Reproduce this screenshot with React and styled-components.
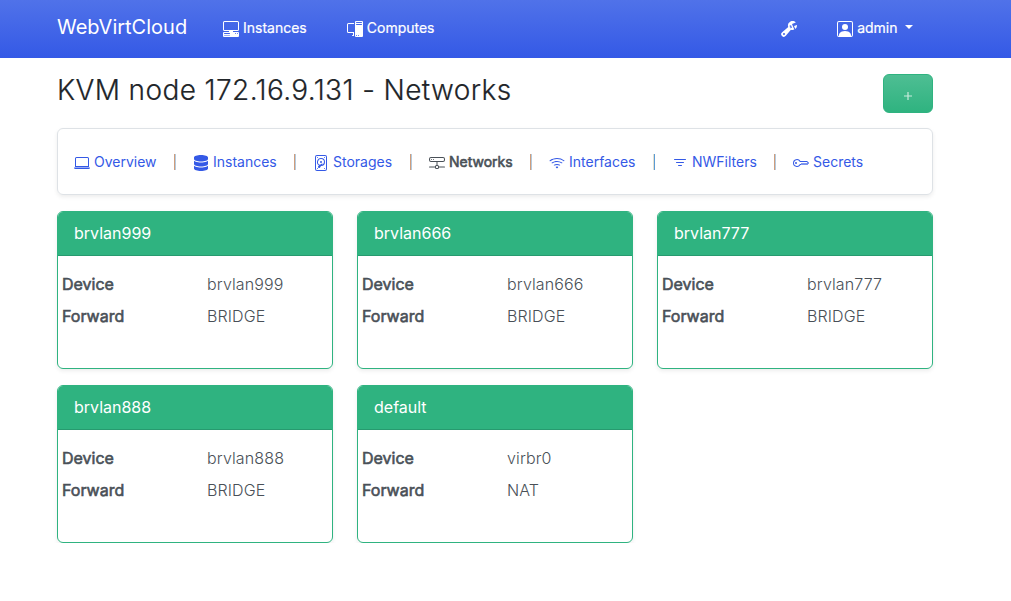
import React from 'react';
import styled, { createGlobalStyle } from 'styled-components';
import {
  BsPcDisplayHorizontal, BsPcDisplay, BsWrenchAdjustable, BsPersonSquare, BsLaptop,
  BsDeviceHdd, BsHddNetwork, BsWifi, BsFilter, BsKey,
} from 'react-icons/bs';
import { FaDatabase } from 'react-icons/fa6';

const Global = createGlobalStyle`
  *, *::before, *::after { box-sizing: border-box; }
  body {
    margin: 0;
    background: #fff;
    color: #495057;
    font-family: Inter, "Liberation Sans", sans-serif;
    font-size: 16px;
    font-weight: 400;
    line-height: 24px;
  }
`;

const Navbar = styled.header`
  display: flex;
  align-items: center;
  height: 58px;
  padding: 0 98px 0 57px;
  color: #fff;
  background: linear-gradient(180deg, #5072e9, #3459e6);
`;

const Brand = styled.div`
  width: 166px;
  font-size: 20px;
  line-height: 30px;
  padding-bottom: 4px;
`;

const NavItem = styled.a`
  display: flex;
  align-items: center;
  gap: 4px;
  height: 22px;
  padding-bottom: 2px;
  margin-right: ${(p) => p.$gap || 0}px;
  font-size: 14px;
  -webkit-text-stroke: 0.2px;
  white-space: nowrap;
  svg { position: relative; top: 1px; }
`;

const NavEnd = styled.div`
  display: flex;
  margin-left: auto;
`;

const Caret = styled.span`
  margin: -2px 0 0 3.5px;
  border-top: 4px solid #fff;
  border-left: 4px solid transparent;
  border-right: 4px solid transparent;
`;

const Page = styled.main`
  width: 876px;
  margin-left: 57px;
`;

const TitleRow = styled.div`
  display: flex;
  justify-content: space-between;
  height: 70px;
  padding-top: 16px;
`;

const Title = styled.h1`
  margin: 0;
  color: #212529;
  font-size: 28px;
  font-weight: 300;
  letter-spacing: 0.39px;
  line-height: 33px;
  -webkit-text-stroke: 0.2px;
`;

const AddButton = styled.button`
  display: flex;
  align-items: center;
  justify-content: center;
  width: 50px;
  height: 39px;
  padding: 5px 0 0;
  border: 1px solid #2fb380;
  border-radius: 6px;
  background: linear-gradient(180deg, #4ebe93, #2fb380);
`;

const Tabs = styled.nav`
  display: flex;
  align-items: center;
  height: 67px;
  padding: 0 16px;
  border: 1px solid #dee2e6;
  border-radius: 6px;
  box-shadow: 0 2px 4px rgba(0, 0, 0, 0.075);
  font-size: 14px;
`;

const Tab = styled.a`
  display: flex;
  align-items: center;
  gap: 4px;
  width: ${(p) => p.$w}px;
  flex-shrink: 0;
  color: ${(p) => (p.$active ? '#495057' : '#3459e6')};
  -webkit-text-stroke: ${(p) => (p.$active ? '0.6px' : '0')};
  white-space: nowrap;
  svg { flex-shrink: 0; position: relative; top: 1.5px; }
`;

const Divider = styled.span`
  flex: 0 0 2px;
  height: 16px;
  margin-right: ${(p) => p.$gap}px;
  background: ${(p) => (p.$cool
    ? 'linear-gradient(90deg, #e3dfcf 50%, #5b9bd5 50%)'
    : 'linear-gradient(90deg, #cf9d7c 50%, #b3cbe0 50%)')};
`;

const Grid = styled.section`
  display: grid;
  grid-template-columns: repeat(3, 276px);
  gap: 16px 24px;
  margin-top: 16px;
`;

const Card = styled.article`
  height: 158px;
  overflow: hidden;
  border: 1px solid #2fb380;
  border-radius: 6px;
  box-shadow: 0 2px 4px rgba(0, 0, 0, 0.075);
`;

const CardHeader = styled.h2`
  height: 44px;
  margin: 0;
  padding: 9px 16px;
  border-bottom: 1px solid #279a6f;
  background: #2fb380;
  color: #fff;
  font-size: 16px;
  font-weight: 400;
  line-height: 24px;
`;

const Details = styled.dl`
  display: grid;
  grid-template-columns: 145px 1fr;
  row-gap: 8px;
  margin: 0;
  padding: 16px 4px 0;
`;

const Label = styled.dt`
  -webkit-text-stroke: 0.6px;
`;

const Value = styled.dd`
  margin: 0;
  font-weight: 360;
  letter-spacing: 0.13px;
`;

const tabs = [
  { name: 'Overview', Icon: BsLaptop, w: 100, gap: 17 },
  { name: 'Instances', Icon: FaDatabase, w: 101, gap: 17 },
  { name: 'Storages', Icon: BsDeviceHdd, w: 97, gap: 17 },
  { name: 'Networks', Icon: BsHddNetwork, w: 101, gap: 17, active: true },
  { name: 'Interfaces', Icon: BsWifi, w: 104, gap: 17, cool: true },
  { name: 'NWFilters', Icon: BsFilter, w: 102, gap: 17 },
  { name: 'Secrets', Icon: BsKey, w: 72 },
];

const networks = [
  ['brvlan999', 'brvlan999', 'BRIDGE'],
  ['brvlan666', 'brvlan666', 'BRIDGE'],
  ['brvlan777', 'brvlan777', 'BRIDGE'],
  ['brvlan888', 'brvlan888', 'BRIDGE'],
  ['default', 'virbr0', 'NAT'],
];

export default function App() {
  return (
    <>
      <Global />
      <Navbar>
        <Brand>WebVirtCloud</Brand>
        <NavItem $gap={40}><BsPcDisplayHorizontal size={16} />Instances</NavItem>
        <NavItem><BsPcDisplay size={16} />Computes</NavItem>
        <NavEnd>
          <NavItem $gap={40}><BsWrenchAdjustable size={16} /></NavItem>
          <NavItem><BsPersonSquare size={16} />admin<Caret /></NavItem>
        </NavEnd>
      </Navbar>
      <Page>
        <TitleRow>
          <Title>KVM node 172.16.9.131 - Networks</Title>
          <AddButton aria-label="Add network">
            <svg width="8" height="8" viewBox="0 0 8 8" stroke="#c9ebdd" strokeWidth="1.2">
              <path d="M4 0v8M0 4h8" />
            </svg>
          </AddButton>
        </TitleRow>
        <Tabs>
          {tabs.map(({ name, Icon, w, gap, active, cool }) => (
            <React.Fragment key={name}>
              <Tab $w={w} $active={active}><Icon size={16} />{name}</Tab>
              {gap && <Divider $gap={gap} $cool={cool} />}
            </React.Fragment>
          ))}
        </Tabs>
        <Grid>
          {networks.map(([name, device, forward]) => (
            <Card key={name}>
              <CardHeader>{name}</CardHeader>
              <Details>
                <Label>Device</Label><Value>{device}</Value>
                <Label>Forward</Label><Value>{forward}</Value>
              </Details>
            </Card>
          ))}
        </Grid>
      </Page>
    </>
  );
}
